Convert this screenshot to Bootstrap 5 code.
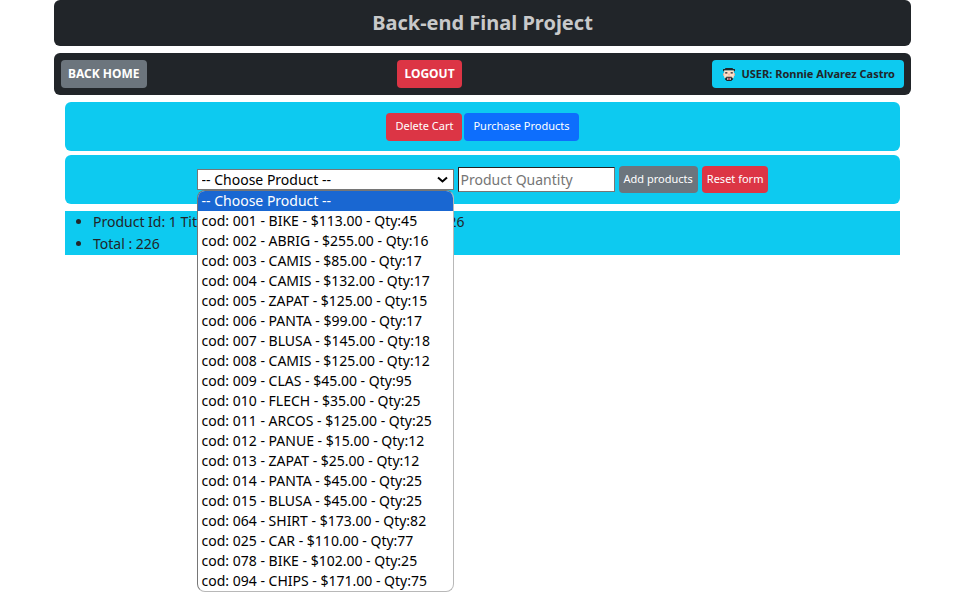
<!DOCTYPE html>
<html lang="en">
<head>
<meta charset="utf-8">
<meta name="viewport" content="width=device-width, initial-scale=1">
<title>Back-end Final Project</title>
<link rel="stylesheet" href="https://cdn.jsdelivr.net/npm/bootstrap@5.3.0/dist/css/bootstrap.min.css">
<style>
body { font-family: "Noto Sans", "Open Sans", sans-serif; font-size: 14px; line-height: 22px; }
.page { padding: 0 50px 0 54px; }
.bar { border-radius: 6px; margin-bottom: 7px; }
.title-bar { padding: 10px; }
.title-bar h1 { font-size: 20px; line-height: 26px; color: #c8c9ca; }
.nav-bar { padding: 7px; }
.page .btn { font-size: 11px; line-height: 18px; padding: 4px 5px 5px; border-radius: 4px; white-space: nowrap; }
.page .nav-bar .btn { font-weight: 700; line-height: 20px; padding: 4px 8px; }
.page .nav-bar .btn-caps { font-size: 12px; padding: 4px 7px; }
.page .nav-bar .btn-user { padding: 4px 9px 4px 11px; color: #212529; gap: 6px; }
.page .btn-roomy { line-height: 18px; padding: 4px 9px 6px; }
.content { padding: 0 11px; }
.panel { border-radius: 6px; padding: 11px 11px 10px; }
.panel-actions { gap: 2px; margin-bottom: 4px; }
.panel-form { gap: 4px; padding-bottom: 11px; margin-bottom: 7px; }
.picker { width: 257px; }
.picker-field { width: 100%; height: 21px; appearance: none; border: 1px solid #767676; border-radius: 0; background: #fff; color: #000; padding: 0 4px; font-size: 14px; line-height: 18px; display: block; }
.picker-arrow { right: 6px; top: 7px; pointer-events: none; }
.picker-menu { top: 21px; left: 0; width: 100%; z-index: 5; background: #fff; color: #000; border: 1px solid #b8b8b8; border-left-color: #767676; border-top-color: #767676; border-radius: 8px; overflow: hidden; line-height: 20px; }
.picker-menu li { padding: 0 4px; white-space: nowrap; }
.picker-menu li[aria-selected="true"] { background: #1967d2; color: #fff; }
.quantity { width: 157px; height: 25px; border: 1px solid #767676; border-top-color: #222; border-left-color: #222; padding: 0 2px; font-size: 14px; }
.quantity::placeholder { color: #757575; }
.cart { padding-left: 28px; line-height: 22px; }
</style>
</head>
<body class="bg-white">
<div class="page min-vh-100">
  <header class="bar title-bar bg-dark text-center"><h1 class="fw-bold m-0">Back-end Final Project</h1></header>
  <nav class="bar nav-bar bg-dark d-flex justify-content-between align-items-center" aria-label="Main">
    <a href="#" class="btn btn-secondary border-0 btn-caps">BACK HOME</a>
    <a href="#" class="btn btn-danger border-0 btn-caps">LOGOUT</a>
    <a href="#" class="btn btn-info border-0 btn-user d-flex align-items-center">
      <svg width="12" height="13" viewBox="0 0 11 12" aria-hidden="true">
        <path fill="#ffdfc8" d="M1 2h9v3h1v2h-1v2H9v1H2V9H1V7H0V5h1z"/>
        <path fill="#212529" d="M2 0h7v1h2v2h-1V2H1v1H0V1h2zM2 4h2v1H2zM7 4h2v1H7zM3 8h5v1h1v2H8v1H3v-1H2V9h1z"/>
        <path fill="#f4a58d" d="M5 5h1v2H5zM0 5h1v2H0zM10 5h1v2h-1z"/>
        <path fill="#fff" d="M4 9h1v2H4zM6 9h1v2H6z"/><path fill="#c9343c" d="M5 9h1v2H5z"/>
      </svg>
      <span>USER: Ronnie Alvarez Castro</span></a>
  </nav>
  <main class="content">
    <section class="panel panel-actions bg-info d-flex justify-content-center align-items-start">
      <button type="button" class="btn btn-danger border-0 btn-roomy">Delete Cart</button>
      <button type="button" class="btn btn-primary border-0 btn-roomy">Purchase Products</button>
    </section>
    <form class="panel panel-form bg-info d-flex justify-content-center align-items-center">
      <div class="picker position-relative">
        <select class="picker-field" aria-label="Product"><option>-- Choose Product --</option></select>
        <svg class="picker-arrow position-absolute" width="11" height="8" viewBox="0 0 11 8" aria-hidden="true"><path d="M1 1.500l4.500 4 4.500-4" fill="none" stroke="#000" stroke-width="2"/></svg>
        <ul class="picker-menu position-absolute list-unstyled m-0" role="listbox" aria-label="Products">
          <li role="option" aria-selected="true">-- Choose Product --</li>
          <li role="option">cod: 001 - BIKE - $113.00 - Qty:45</li>
          <li role="option">cod: 002 - ABRIG - $255.00 - Qty:16</li>
          <li role="option">cod: 003 - CAMIS - $85.00 - Qty:17</li>
          <li role="option">cod: 004 - CAMIS - $132.00 - Qty:17</li>
          <li role="option">cod: 005 - ZAPAT - $125.00 - Qty:15</li>
          <li role="option">cod: 006 - PANTA - $99.00 - Qty:17</li>
          <li role="option">cod: 007 - BLUSA - $145.00 - Qty:18</li>
          <li role="option">cod: 008 - CAMIS - $125.00 - Qty:12</li>
          <li role="option">cod: 009 - CLAS - $45.00 - Qty:95</li>
          <li role="option">cod: 010 - FLECH - $35.00 - Qty:25</li>
          <li role="option">cod: 011 - ARCOS - $125.00 - Qty:25</li>
          <li role="option">cod: 012 - PANUE - $15.00 - Qty:12</li>
          <li role="option">cod: 013 - ZAPAT - $25.00 - Qty:12</li>
          <li role="option">cod: 014 - PANTA - $45.00 - Qty:25</li>
          <li role="option">cod: 015 - BLUSA - $45.00 - Qty:25</li>
          <li role="option">cod: 064 - SHIRT - $173.00 - Qty:82</li>
          <li role="option">cod: 025 - CAR - $110.00 - Qty:77</li>
          <li role="option">cod: 078 - BIKE - $102.00 - Qty:25</li>
          <li role="option">cod: 094 - CHIPS - $171.00 - Qty:75</li>
        </ul>
      </div>
      <input class="quantity" type="text" placeholder="Product Quantity" aria-label="Product Quantity">
      <button type="button" class="btn btn-secondary border-0">Add products</button>
      <button type="reset" class="btn btn-danger border-0">Reset form</button>
    </form>
    <ul class="cart bg-info m-0">
      <li>Product Id: 1 Title: BIKE Price: $113 Quantity: 2 Total: 226</li>
      <li>Total : 226</li>
    </ul>
  </main>
</div>
<script src="https://cdn.jsdelivr.net/npm/bootstrap@5.3.0/dist/js/bootstrap.bundle.min.js"></script>
</body>
</html>
